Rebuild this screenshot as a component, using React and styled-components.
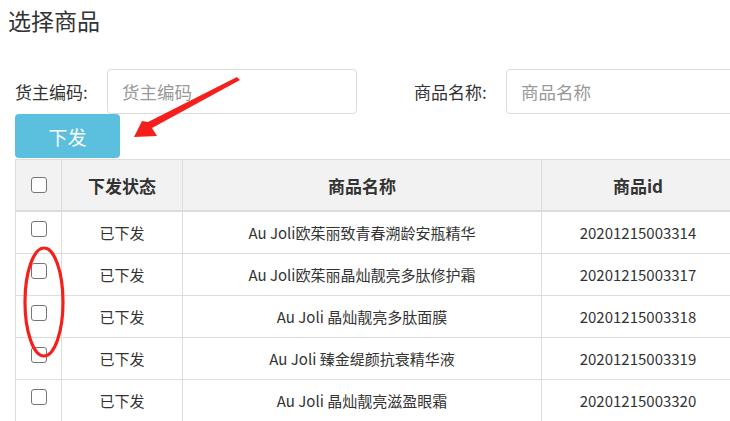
import React from 'react';
import styled, { createGlobalStyle } from 'styled-components';

const GlobalStyle = createGlobalStyle`
  html, body {
    margin: 0;
    padding: 0;
    overflow: hidden;
    background: #fff;
  }
  body {
    font-family: "Noto Sans CJK SC", "Noto Sans", sans-serif;
    color: #333;
  }
`;

const Page = styled.div`
  position: relative;
  width: 730px;
  height: 421px;
  overflow: hidden;
`;

const Title = styled.h2`
  margin: 0;
  padding: 4px 0 0 8px;
  font-size: 23px;
  line-height: 32px;
  font-weight: normal;
  color: #333;
`;

const FilterRow = styled.div`
  display: flex;
  align-items: center;
  margin-top: 33px;
  padding-left: 15px;
  white-space: nowrap;
`;

const Field = styled.div`
  display: flex;
  align-items: center;
  margin-left: ${p => p.$offset || 0}px;
`;

const Label = styled.span`
  font-size: 17px;
  width: ${p => p.$width}px;
  flex-shrink: 0;
`;

const Input = styled.input`
  box-sizing: border-box;
  width: 250px;
  height: 45px;
  border: 1px solid #dcdcdc;
  border-radius: 4px;
  padding: 0 14px;
  font-family: inherit;
  font-size: 17.5px;
  color: #333;
  outline: none;
  flex-shrink: 0;
  &::placeholder {
    color: #999;
  }
`;

const Button = styled.button`
  display: block;
  margin-left: 15px;
  width: 105px;
  height: 44px;
  border: none;
  border-radius: 4px;
  background: #5bc0de;
  color: #fff;
  font-family: inherit;
  font-size: 19px;
  padding: 0;
`;

const Table = styled.table`
  margin: 1px 0 0 15px;
  border-collapse: collapse;
  table-layout: fixed;
  width: 719px;
`;

const Col = styled.col`
  width: ${p => p.$width}px;
`;

const HeadCell = styled.th`
  height: 50px;
  padding: 0;
  background: #f2f2f2;
  border: 1px solid #ddd;
  border-bottom: 2px solid #ddd;
  font-size: 17px;
  font-weight: bold;
  color: #333;
  text-align: center;
`;

const Cell = styled.td`
  height: 41px;
  padding: 0;
  border: 1px solid #ddd;
  font-size: 15px;
  color: #333;
  text-align: center;
  white-space: nowrap;
`;

const Check = styled.input.attrs({ type: 'checkbox' })`
  appearance: none;
  display: block;
  box-sizing: border-box;
  width: 16px;
  height: 16px;
  margin: ${p => (p.$head ? '-1px' : '-7px')} auto 0;
  border: 1px solid #767676;
  border-radius: 3px;
  background: #fff;
`;

const Overlay = styled.svg`
  position: absolute;
  left: 0;
  top: 0;
  pointer-events: none;
`;

const rows = [
  { name: 'Au Joli欧茱丽致青春溯龄安瓶精华', id: '20201215003314' },
  { name: 'Au Joli欧茱丽晶灿靓亮多肽修护霜', id: '20201215003317' },
  { name: 'Au Joli 晶灿靓亮多肽面膜', id: '20201215003318' },
  { name: 'Au Joli 臻金缇颜抗衰精华液', id: '20201215003319' },
  { name: 'Au Joli 晶灿靓亮滋盈眼霜', id: '20201215003320' },
];

export default function App() {
  return (
    <Page>
      <GlobalStyle />
      <Title>选择商品</Title>
      <FilterRow>
        <Field>
          <Label $width={92}>货主编码:</Label>
          <Input placeholder="货主编码" />
        </Field>
        <Field $offset={57}>
          <Label $width={92}>商品名称:</Label>
          <Input placeholder="商品名称" />
        </Field>
      </FilterRow>
      <Button>下发</Button>
      <Table>
        <colgroup>
          <Col $width={46} />
          <Col $width={121} />
          <Col $width={359} />
          <Col $width={193} />
        </colgroup>
        <thead>
          <tr>
            <HeadCell><Check $head /></HeadCell>
            <HeadCell>下发状态</HeadCell>
            <HeadCell>商品名称</HeadCell>
            <HeadCell>商品id</HeadCell>
          </tr>
        </thead>
        <tbody>
          {rows.map(r => (
            <tr key={r.id}>
              <Cell><Check /></Cell>
              <Cell>已下发</Cell>
              <Cell>{r.name}</Cell>
              <Cell>{r.id}</Cell>
            </tr>
          ))}
        </tbody>
      </Table>
      <Overlay width="730" height="421" viewBox="0 0 730 421">
        <polygon
          points="134,137 142,121 148,122 237,77 240,80 152,128 157,136"
          fill="#f5201c"
        />
        <ellipse cx="44" cy="302" rx="19" ry="54" fill="none" stroke="#f5201c" strokeWidth="3.2" />
      </Overlay>
    </Page>
  );
}
